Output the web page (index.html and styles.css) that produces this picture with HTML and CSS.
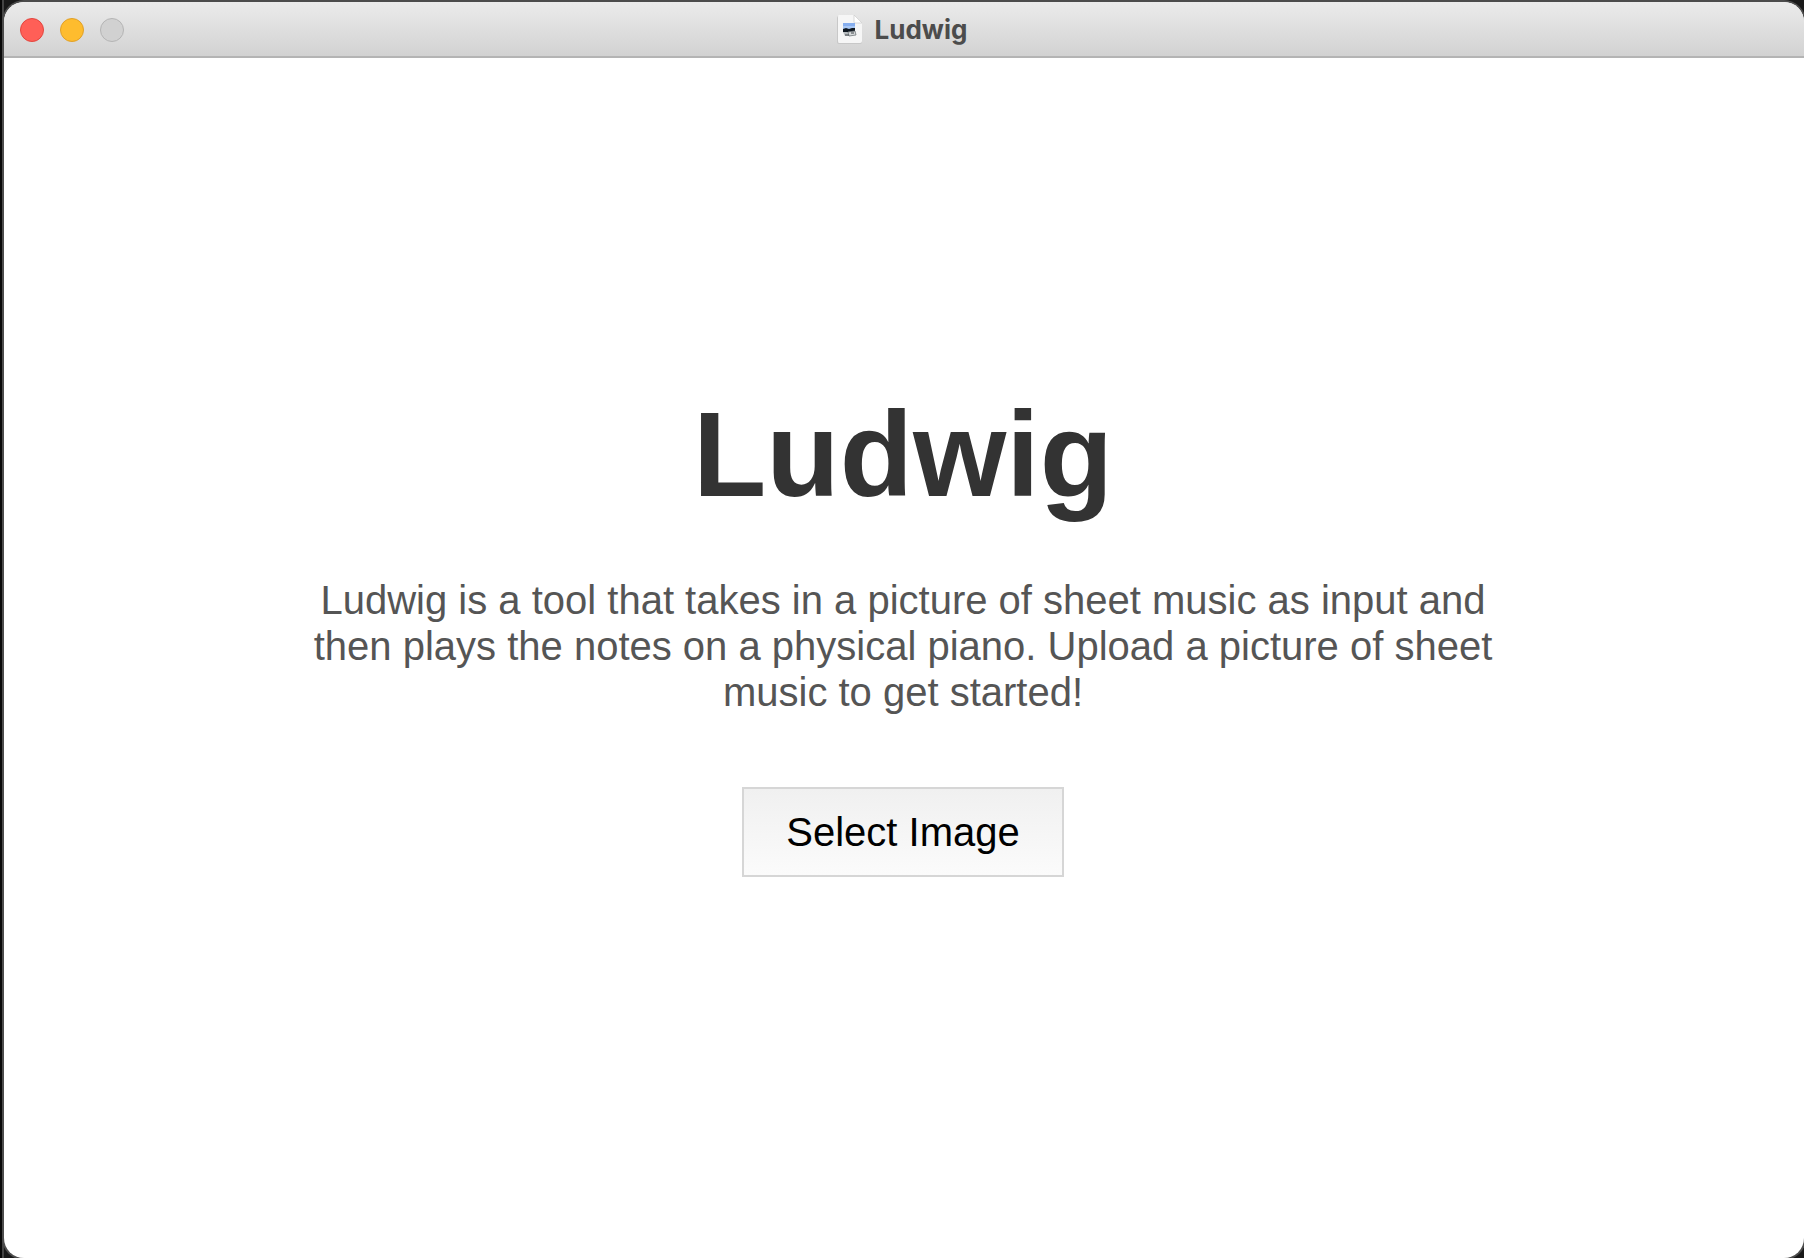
FILE: index.html
```html
<!DOCTYPE html>
<html lang="en">
<head>
  <meta charset="UTF-8">
  <meta name="viewport" content="width=device-width, initial-scale=1.0">
  <title>Ludwig</title>
  <link rel="stylesheet" href="styles.css">
</head>
<body>
  <div class="window">
    <header class="titlebar">
      <div class="controls">
        <button class="dot close" aria-label="Close"></button>
        <button class="dot minimize" aria-label="Minimize"></button>
        <button class="dot zoom" aria-label="Zoom" disabled></button>
      </div>
      <div class="window-title">
        <svg class="file-icon" width="26" height="30" viewBox="0 0 26 30" aria-hidden="true">
          <path d="M2 1H17L25 9V27Q25 29 23 29H2Q0 29 0 27V3Q0 1 2 1Z" fill="#c8c8c8"/>
          <path d="M2 0H17L25 8V26Q25 28 23 28H2Q1 28 1 26V2Q1 0 2 0Z" fill="#f6f6f6"/>
          <path d="M17 0L25 8H18Q17 8 17 7Z" fill="#ffffff" stroke="#d0d0d0" stroke-width="0.8"/>
          <rect x="6" y="8" width="12" height="6" fill="#86aeee"/>
          <rect x="6" y="11" width="12" height="3" fill="#a9c8f5"/>
          <path d="M6 14L9 13L12 14L15 13H18V17H6Z" fill="#101820"/>
          <path d="M6 17H11L12 21H8Z" fill="#b8bdc0"/>
          <path d="M11 17L18 16L19 20L12 21Z" fill="#d8dbdc" stroke="#70767a" stroke-width="0.8"/>
          <path d="M8 20H12M14 18L17 18" stroke="#40464a" fill="none"/>
        </svg>
        <span>Ludwig</span>
      </div>
    </header>

    <main class="content">
      <h1>Ludwig</h1>
      <p>Ludwig is a tool that takes in a picture of sheet music as input and then plays the notes on a physical piano. Upload a picture of sheet music to get started!</p>
      <button class="select-button">Select Image</button>
    </main>
  </div>
</body>
</html>
```

FILE: styles.css
```css
* {
  box-sizing: border-box;
}

body {
  margin: 0;
  min-height: 100vh;
  padding: 2px 0 0 4px;
  display: flex;
  background: linear-gradient(to right, #080808 0, #080808 2px, #444444 2px, #444444 4px, #191919 4px);
  font-family: "Liberation Sans", Arial, sans-serif;
}

.window {
  flex: 1;
  display: flex;
  flex-direction: column;
  background: #ffffff;
  border-radius: 20px;
  box-shadow: 0 0 0 2px #4c4c4c;
  overflow: hidden;
}

.titlebar {
  display: grid;
  grid-template-columns: 1fr auto 1fr;
  align-items: center;
  height: 56px;
  padding: 2px 20px 0 16px;
  background: linear-gradient(to bottom, #ebebeb, #d2d2d2);
  border-bottom: 2px solid #b4b4b4;
}

.controls {
  display: flex;
  gap: 16px;
}

.dot {
  width: 24px;
  height: 24px;
  padding: 0;
  border: 1px solid #e2463f;
  border-radius: 50%;
  background: #ff5f57;
}

.minimize {
  border-color: #e0a028;
  background: #febc2e;
}

.zoom {
  border-color: #b4b4b4;
  background: #d1d1d1;
}

.window-title {
  display: flex;
  align-items: center;
  gap: 12px;
  color: #4c4c4c;
  font-family: Inter, sans-serif;
  font-size: 26px;
  font-weight: 700;
  line-height: 30px;
}

.file-icon {
  display: block;
}

.content {
  flex: 1;
  display: flex;
  flex-direction: column;
  align-items: center;
  justify-content: center;
  padding: 0 42px 54px 40px;
  text-align: center;
}

h1 {
  margin: 0 0 54px;
  color: #333333;
  font-size: 120px;
  line-height: 138px;
}

p {
  max-width: 1200px;
  margin: 0 0 72px;
  color: #555555;
  font-size: 40px;
  line-height: 46px;
}

.select-button {
  padding: 20px 42px;
  border: 2px solid #d6d6d6;
  background: linear-gradient(to bottom, #f0f0f0, #fbfbfb);
  color: #000000;
  font-family: inherit;
  font-size: 40px;
  line-height: 46px;
}
```
